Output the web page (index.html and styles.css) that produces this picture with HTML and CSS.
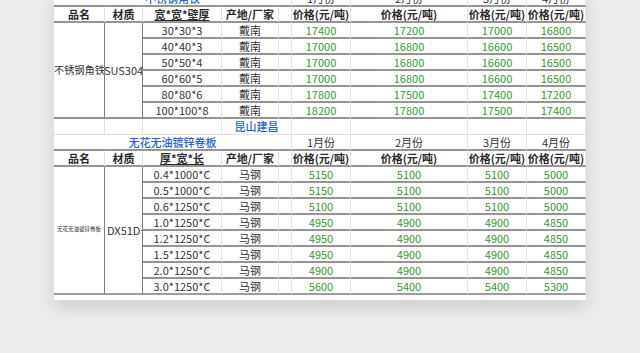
FILE: index.html
```html
<!DOCTYPE html>
<html lang="zh-CN">
<head>
<meta charset="utf-8">
<title>价格表</title>
<link rel="stylesheet" href="styles.css">
</head>
<body>
<div class="sheet">
  <div class="grid">
    <!-- top row (cut) -->
    <div class="c blue span5 bd">不锈钢角铁</div>
    <div class="c bd">1月份</div>
    <div class="c bd">2月份</div>
    <div class="c bd">3月份</div>
    <div class="c bd">4月份</div>

    <!-- header 1 -->
    <div class="c hd bd">品名</div>
    <div class="c hd bd">材质</div>
    <div class="c hd bd"><span class="ul">宽*宽*壁厚</span></div>
    <div class="c hd bd">产地/厂家</div>
    <div class="c bd"></div>
    <div class="c hd bd">价格(元/吨)</div>
    <div class="c hd bd">价格(元/吨)</div>
    <div class="c hd bd">价格(元/吨)</div>
    <div class="c hd bd">价格(元/吨)</div>

    <!-- data 1 -->
    <div class="c rows6 dk bd fit">不锈钢角铁</div>
    <div class="c rows6 dk bd">SUS304</div>
    <div class="c bd">30*30*3</div><div class="c bd">戴南</div><div class="c bd"></div>
    <div class="c g bd">17400</div><div class="c g bd">17200</div><div class="c g bd">17000</div><div class="c g bd">16800</div>
    <div class="c bd">40*40*3</div><div class="c bd">戴南</div><div class="c bd"></div>
    <div class="c g bd">17000</div><div class="c g bd">16800</div><div class="c g bd">16600</div><div class="c g bd">16500</div>
    <div class="c bd">50*50*4</div><div class="c bd">戴南</div><div class="c bd"></div>
    <div class="c g bd">17000</div><div class="c g bd">16800</div><div class="c g bd">16600</div><div class="c g bd">16500</div>
    <div class="c bd">60*60*5</div><div class="c bd">戴南</div><div class="c bd"></div>
    <div class="c g bd">17000</div><div class="c g bd">16800</div><div class="c g bd">16600</div><div class="c g bd">16500</div>
    <div class="c bd">80*80*6</div><div class="c bd">戴南</div><div class="c bd"></div>
    <div class="c g bd">17800</div><div class="c g bd">17500</div><div class="c g bd">17400</div><div class="c g bd">17200</div>
    <div class="c bd">100*100*8</div><div class="c bd">戴南</div><div class="c bd"></div>
    <div class="c g bd">18200</div><div class="c g bd">17800</div><div class="c g bd">17500</div><div class="c g bd">17400</div>

    <!-- 昆山建昌 -->
    <div class="c bl"></div>
    <div class="c bl"></div>
    <div class="c bl"></div>
    <div class="c blue span2 bl">昆山建昌</div>
    <div class="c bl"></div>
    <div class="c bl"></div>
    <div class="c bl"></div>
    <div class="c bl"></div>

    <!-- title 2 -->
    <div class="c blue span5 bd">无花无油镀锌卷板</div>
    <div class="c bd">1月份</div>
    <div class="c bd">2月份</div>
    <div class="c bd">3月份</div>
    <div class="c bd">4月份</div>

    <!-- header 2 -->
    <div class="c hd bd">品名</div>
    <div class="c hd bd">材质</div>
    <div class="c hd bd"><span class="ul">厚*宽*长</span></div>
    <div class="c hd bd">产地/厂家</div>
    <div class="c bd"></div>
    <div class="c hd bd">价格(元/吨)</div>
    <div class="c hd bd">价格(元/吨)</div>
    <div class="c hd bd">价格(元/吨)</div>
    <div class="c hd bd">价格(元/吨)</div>

    <!-- data 2 -->
    <div class="c rows8 dk bend"><span class="tiny">无花无油镀锌卷板</span></div>
    <div class="c rows8 dk bend left">DX51D+</div>
    <div class="c bd">0.4*1000*C</div><div class="c bd">马钢</div><div class="c bd"></div>
    <div class="c g bd">5150</div><div class="c g bd">5100</div><div class="c g bd">5100</div><div class="c g bd">5000</div>
    <div class="c bd">0.5*1000*C</div><div class="c bd">马钢</div><div class="c bd"></div>
    <div class="c g bd">5150</div><div class="c g bd">5100</div><div class="c g bd">5100</div><div class="c g bd">5000</div>
    <div class="c bd">0.6*1250*C</div><div class="c bd">马钢</div><div class="c bd"></div>
    <div class="c g bd">5100</div><div class="c g bd">5100</div><div class="c g bd">5100</div><div class="c g bd">5000</div>
    <div class="c bd">1.0*1250*C</div><div class="c bd">马钢</div><div class="c bd"></div>
    <div class="c g bd">4950</div><div class="c g bd">4900</div><div class="c g bd">4900</div><div class="c g bd">4850</div>
    <div class="c bd">1.2*1250*C</div><div class="c bd">马钢</div><div class="c bd"></div>
    <div class="c g bd">4950</div><div class="c g bd">4900</div><div class="c g bd">4900</div><div class="c g bd">4850</div>
    <div class="c bd">1.5*1250*C</div><div class="c bd">马钢</div><div class="c bd"></div>
    <div class="c g bd">4950</div><div class="c g bd">4900</div><div class="c g bd">4900</div><div class="c g bd">4850</div>
    <div class="c bd">2.0*1250*C</div><div class="c bd">马钢</div><div class="c bd"></div>
    <div class="c g bd">4900</div><div class="c g bd">4900</div><div class="c g bd">4900</div><div class="c g bd">4850</div>
    <div class="c bend">3.0*1250*C</div><div class="c bend">马钢</div><div class="c bend"></div>
    <div class="c g bend">5600</div><div class="c g bend">5400</div><div class="c g bend">5400</div><div class="c g bend">5300</div>
  </div>
</div>
</body>
</html>
```

FILE: styles.css
```css
* {
  box-sizing: border-box;
  margin: 0;
  padding: 0;
}

html, body {
  height: 353px;
  overflow: hidden;
}

body {
  background: #ececec;
  font-family: "Noto Sans CJK SC", "Noto Sans", sans-serif;
  font-size: 11px;
  color: #333;
}

.sheet {
  width: 532px;
  margin: -9px 0 0 54px;
  padding-bottom: 5px;
  background: #fff;
  box-shadow: 0 8px 16px rgba(0, 0, 0, 0.12);
}

.grid {
  display: grid;
  grid-template-columns: 51px 38px 79px 57px 13px 59px 117px 59px 59px;
  grid-auto-rows: 16px;
}

.c {
  display: flex;
  align-items: center;
  justify-content: center;
  white-space: nowrap;
  overflow: hidden;
  line-height: 1;
  border-right: 1px solid #e2e2e2;
}

.bd {
  border-bottom: 2px solid #959595;
}

.bl {
  border-bottom: 1px solid #e2e2e2;
}

.bend {
  border-bottom: 2px solid #9d9d9d;
}

.dk {
  border-right: 1px solid #7e7e7e;
}

.span2 {
  grid-column: span 2;
}

.span5 {
  grid-column: span 5;
}

.rows6 {
  grid-row: span 6;
}

.rows8 {
  grid-row: span 8;
}

.fit {
  font-size: 10.2px;
  justify-content: flex-start;
}

.hd {
  font-weight: 700;
  color: #2b2b2b;
}

.ul {
  text-decoration: underline;
}

.g {
  color: #2f9b2f;
}

.blue {
  color: #1f63d4;
  font-weight: 500;
}

.left {
  justify-content: flex-start;
  padding-left: 2px;
}

.tiny {
  font-size: 5.5px;
}
```
